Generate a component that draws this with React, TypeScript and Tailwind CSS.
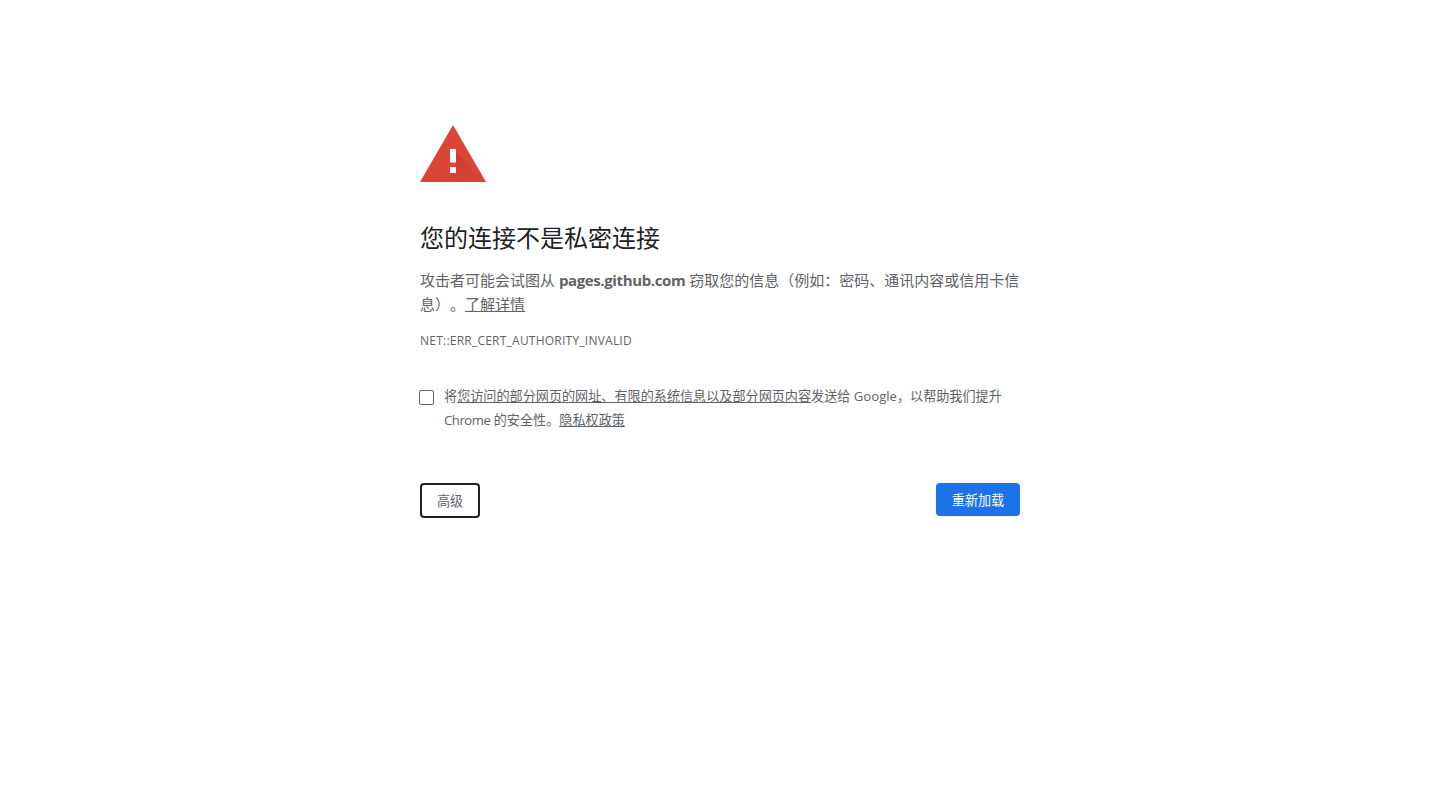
import React from 'react';

const FONT = "font-['Open_Sans','Noto_Sans_CJK_SC',sans-serif]";

const WarningIcon: React.FC = () => (
  <svg width="66" height="57" viewBox="0 0 66 57" className="block">
    <defs>
      <linearGradient id="shade" gradientUnits="userSpaceOnUse" x1="32" y1="30" x2="54" y2="52">
        <stop offset="0" stopColor="#8f2a20" stopOpacity="0.28" />
        <stop offset="1" stopColor="#8f2a20" stopOpacity="0.03" />
      </linearGradient>
    </defs>
    <polygon points="33,0 66,57 0,57" fill="#db4437" />
    <polygon points="36,26 66,57 39,57 30,48 30,42 36,42" fill="url(#shade)" />
    <rect x="30" y="24" width="6" height="13.5" fill="#fff" />
    <rect x="30" y="42" width="6" height="6" fill="#fff" />
  </svg>
);

export default function App() {
  return (
    <div className={`min-h-[789px] bg-white text-[#5f6368] [text-spacing-trim:space-all] ${FONT}`}>
      <div className="mx-auto w-[600px] pt-[125px]">
        <WarningIcon />
        <h1 className="mt-[38px] text-[24px] leading-[36px] font-normal text-[#202124]">您的连接不是私密连接</h1>
        <p className="mt-[12px] text-[15px] leading-[24px]">
          攻击者可能会试图从 <strong className="font-bold tracking-[-0.38px]">pages.github.com</strong> 窃取您的信息（例如：密码、通讯内容或信用卡信息）。<a className="underline">了解详情</a>
        </p>
        <div className="mt-[15px] text-[12px] leading-[20px] tracking-[0.23px]">NET::ERR_CERT_AUTHORITY_INVALID</div>
        <div className="mt-[33px] flex text-[13.125px] leading-[24px]">
          <div className="mt-[6px] mr-[10px] ml-[-1px] h-[15px] w-[15px] shrink-0 rounded-[2px] border border-[#5f6368]" />
          <div>
            将<a className="underline">您访问的部分网页的网址、有限的系统信息以及部分网页内容</a>发送给 Google，以帮助我们提升 <span className="tracking-[-0.45px]">Chrome</span> 的安全性。<a className="underline">隐私权政策</a>
          </div>
        </div>
        <div className="mt-[51px] flex items-start justify-between">
          <button className="h-[35px] w-[60px] rounded-[4px] border-2 border-[#202124] bg-white pt-[2px] text-[13.125px]">高级</button>
          <button className="h-[33px] w-[84px] rounded-[4px] bg-[#1a73e8] pt-[2px] text-[13.125px] text-white">重新加载</button>
        </div>
      </div>
    </div>
  );
}
